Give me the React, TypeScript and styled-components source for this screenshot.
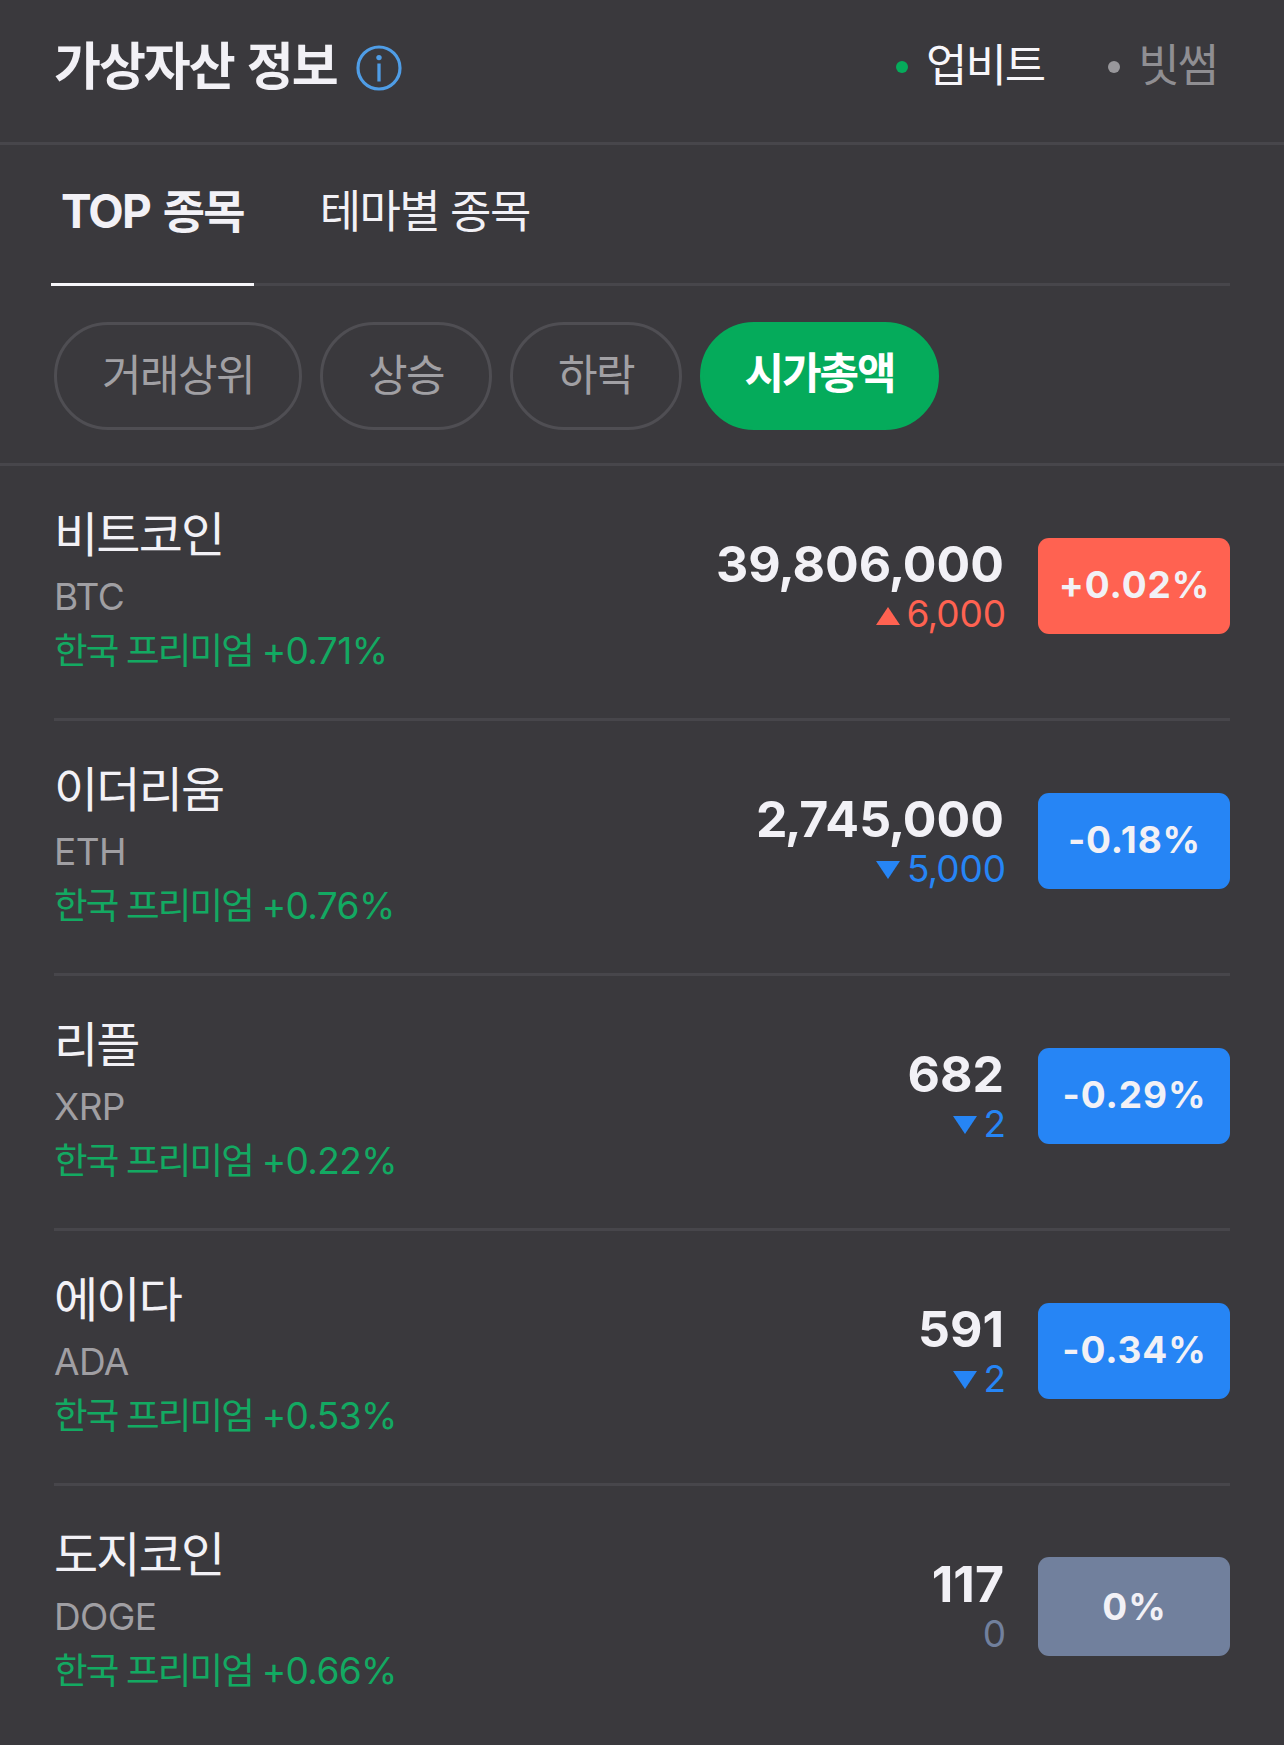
import React from "react";
import styled, { createGlobalStyle } from "styled-components";

type Direction = "up" | "down" | "flat";

const tone: Record<Direction, string> = {
  up: "#ff6251",
  down: "#2685f5",
  flat: "#71809d",
};

const Global = createGlobalStyle`
  *, *::before, *::after { box-sizing: border-box; }
  body {
    margin: 0;
    background: #3a393d;
    color: #f2f1f6;
    font-family: Inter, "Noto Sans CJK KR", sans-serif;
  }
  h1, ul { margin: 0; padding: 0; font-weight: inherit; }
  button { font: inherit; border: 0; background: none; padding: 0; margin: 0; }
`;

const Panel = styled.main`
  width: 1284px;
  height: 1745px;
  overflow: hidden;
  background: #3a393d;
`;

const Header = styled.header`
  display: flex;
  align-items: center;
  height: 145px;
  padding: 0 67px 12px 54px;
  border-bottom: 3px solid #47464b;
`;

const Title = styled.h1`
  padding-top: 3px;
  font-size: 51px;
  line-height: 60px;
  font-weight: 700;
  letter-spacing: -2px;
  word-spacing: 3px;
  white-space: nowrap;
`;

const InfoIcon = styled.svg`
  width: 46px;
  height: 46px;
  margin: 5px 0 0 19px;
  flex: none;
`;

const Exchanges = styled.div`
  display: flex;
  align-items: center;
  gap: 64px;
  margin-left: auto;
`;

const Exchange = styled.button<{ $on?: boolean }>`
  display: flex;
  align-items: center;
  gap: 18px;
  padding-top: 2px;
  font-size: 45px;
  line-height: 60px;
  letter-spacing: -2px;
  color: ${(p) => (p.$on ? "#f7f6fa" : "#8f8e92")};

  &::before {
    content: "";
    width: 12px;
    height: 12px;
    margin-top: 2px;
    border-radius: 50%;
    background: ${(p) => (p.$on ? "#05ab5b" : "#98979b")};
  }
`;

const Tabs = styled.nav`
  display: flex;
  height: 141px;
  margin: 0 54px 0 51px;
  box-shadow: inset 0 -3px #47464b;
`;

const Tab = styled.button<{ $on?: boolean }>`
  height: 141px;
  padding: ${(p) => (p.$on ? "0 10px 6px 10px" : "0 10px 5px 66px")};
  border-bottom: 3px solid ${(p) => (p.$on ? "#f7f6fa" : "transparent")};
  font-size: ${(p) => (p.$on ? 46 : 45)}px;
  line-height: 60px;
  font-weight: ${(p) => (p.$on ? 700 : 400)};
  letter-spacing: ${(p) => (p.$on ? -1.9 : -1.6)}px;
  word-spacing: ${(p) => (p.$on ? 4 : 0)}px;
  color: #f2f1f6;
  white-space: nowrap;
`;

const Chips = styled.div`
  display: flex;
  gap: 18px;
  height: 180px;
  padding: 36px 54px 0;
  border-bottom: 3px solid #47464b;
`;

const Chip = styled.button<{ $on?: boolean; $w: number }>`
  width: ${(p) => p.$w}px;
  height: 108px;
  padding-bottom: ${(p) => (p.$on ? 7 : 2)}px;
  border: 3px solid ${(p) => (p.$on ? "#05ab5b" : "#4f4e53")};
  border-radius: 54px;
  background: ${(p) => (p.$on ? "#05ab5b" : "transparent")};
  color: ${(p) => (p.$on ? "#ffffff" : "#a1a0a4")};
  font-size: 43px;
  line-height: 50px;
  font-weight: ${(p) => (p.$on ? 700 : 400)};
  letter-spacing: ${(p) => (p.$on ? -2 : -1.6)}px;
  white-space: nowrap;
`;

const List = styled.ul`
  list-style: none;
  margin: 0 54px;
`;

const Row = styled.li`
  display: flex;
  height: 255px;
  border-bottom: 3px solid #47464b;

  &:last-child { border-bottom: 0; }
`;

const Info = styled.div`
  flex: 1;
  padding-top: 39px;
`;

const Name = styled.div`
  font-size: 48px;
  line-height: 60px;
  letter-spacing: -1.8px;
`;

const Ticker = styled.div`
  margin-top: 7px;
  font-size: 37px;
  line-height: 50px;
  letter-spacing: -0.6px;
  color: #a09fa3;
`;

const Premium = styled.div`
  margin-top: 4px;
  font-size: 36.5px;
  line-height: 50px;
  letter-spacing: -1.8px;
  color: #13a962;
`;

const PremiumRate = styled.span`
  font-size: 37px;
  letter-spacing: -0.6px;
`;

const Quote = styled.div`
  display: flex;
  flex-direction: column;
  align-items: flex-end;
  padding-top: 68px;
`;

const Price = styled.div`
  font-size: 50px;
  line-height: 60px;
  font-weight: 650;
`;

const Comma = styled.span`
  margin: 0 -0.05em;
`;

const Change = styled.div<{ $dir: Direction }>`
  display: flex;
  align-items: center;
  gap: 7px;
  margin-right: -2px;
  font-size: 37px;
  line-height: 40px;
  letter-spacing: -0.1px;
  color: ${(p) => tone[p.$dir]};
`;

const Triangle = styled.svg<{ $dir: Direction }>`
  width: 24px;
  height: 18px;
  margin-top: ${(p) => (p.$dir === "up" ? 3 : 1)}px;
`;

const Badge = styled.div<{ $dir: Direction }>`
  width: 192px;
  height: ${(p) => (p.$dir === "flat" ? 99 : 96)}px;
  margin: ${(p) => (p.$dir === "flat" ? 71 : 72)}px 0 0 34px;
  padding-left: 1px;
  border-radius: 11px;
  background: ${(p) => tone[p.$dir]};
  color: #f2f1f6;
  font-size: 37px;
  font-weight: 650;
  line-height: ${(p) => (p.$dir === "flat" ? 100 : 93)}px;
  letter-spacing: 0.9px;
  text-align: center;
`;

interface Coin {
  name: string;
  ticker: string;
  premium: string;
  price: string;
  change: string;
  rate: string;
  dir: Direction;
}

const coins: Coin[] = [
  { name: "비트코인", ticker: "BTC", premium: "+0.71%", price: "39,806,000", change: "6,000", rate: "+0.02%", dir: "up" },
  { name: "이더리움", ticker: "ETH", premium: "+0.76%", price: "2,745,000", change: "5,000", rate: "-0.18%", dir: "down" },
  { name: "리플", ticker: "XRP", premium: "+0.22%", price: "682", change: "2", rate: "-0.29%", dir: "down" },
  { name: "에이다", ticker: "ADA", premium: "+0.53%", price: "591", change: "2", rate: "-0.34%", dir: "down" },
  { name: "도지코인", ticker: "DOGE", premium: "+0.66%", price: "117", change: "0", rate: "0%", dir: "flat" },
];

const Arrow = ({ dir }: { dir: Direction }) =>
  dir === "flat" ? null : (
    <Triangle $dir={dir} viewBox="0 0 24 18" fill="currentColor" aria-hidden>
      <path d={dir === "up" ? "M0 18 12 0 24 18z" : "M0 0h24L12 18z"} />
    </Triangle>
  );

/* Digit groups joined by tightly set commas. */
const Amount = ({ value }: { value: string }) => (
  <span>
    {value.split(",").map((group, i) => (
      <React.Fragment key={i}>
        {i > 0 && <Comma>,</Comma>}
        {group}
      </React.Fragment>
    ))}
  </span>
);

export default function App() {
  return (
    <Panel>
      <Global />
      <Header>
        <Title>가상자산 정보</Title>
        <InfoIcon viewBox="0 0 46 46" fill="none" aria-hidden>
          <circle cx="23" cy="23" r="21" stroke="#4f9de6" strokeWidth="3.2" />
          <circle cx="23" cy="12.6" r="2.7" fill="#4f9de6" />
          <path d="M23 18.5v18" stroke="#4f9de6" strokeWidth="3.3" />
        </InfoIcon>
        <Exchanges>
          <Exchange $on>업비트</Exchange>
          <Exchange>빗썸</Exchange>
        </Exchanges>
      </Header>
      <Tabs>
        <Tab $on>TOP 종목</Tab>
        <Tab>테마별 종목</Tab>
      </Tabs>
      <Chips>
        <Chip $w={248}>거래상위</Chip>
        <Chip $w={172}>상승</Chip>
        <Chip $w={172}>하락</Chip>
        <Chip $w={239} $on>시가총액</Chip>
      </Chips>
      <List>
        {coins.map((c) => (
          <Row key={c.ticker}>
            <Info>
              <Name>{c.name}</Name>
              <Ticker>{c.ticker}</Ticker>
              <Premium>
                한국 프리미엄 <PremiumRate>{c.premium}</PremiumRate>
              </Premium>
            </Info>
            <Quote>
              <Price>
                <Amount value={c.price} />
              </Price>
              <Change $dir={c.dir}>
                <Arrow dir={c.dir} />
                <Amount value={c.change} />
              </Change>
            </Quote>
            <Badge $dir={c.dir}>{c.rate}</Badge>
          </Row>
        ))}
      </List>
    </Panel>
  );
}
